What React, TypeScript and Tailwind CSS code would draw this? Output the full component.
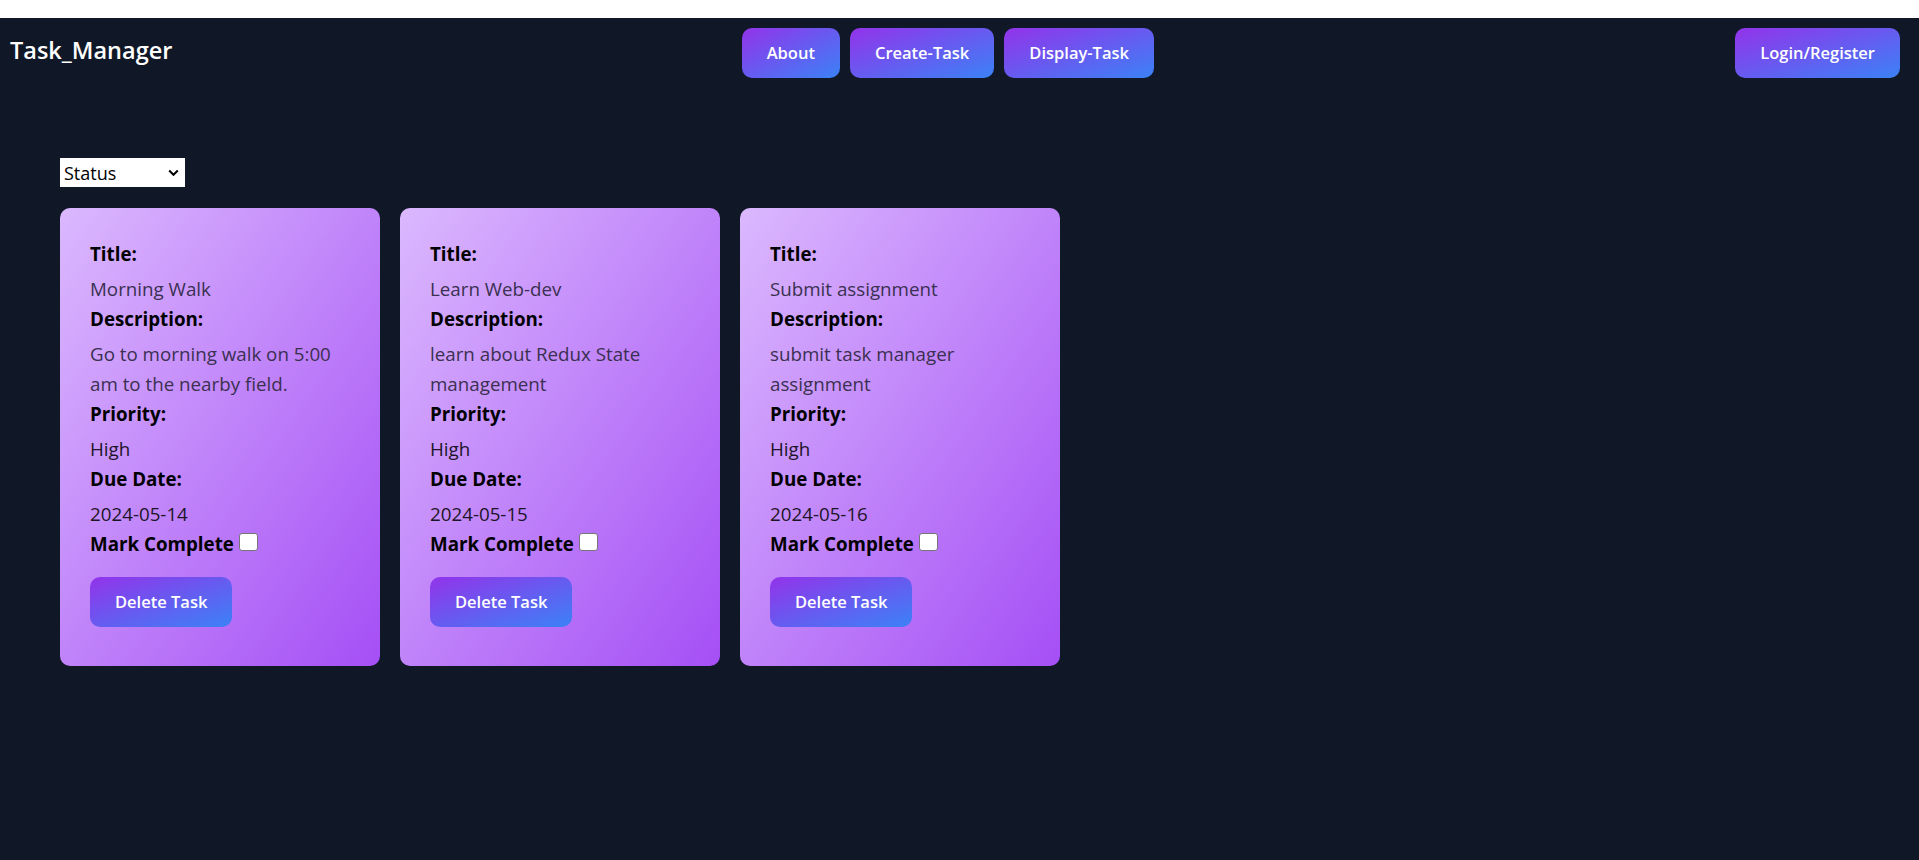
import React from "react";

interface Task {
  title: string;
  description: string;
  priority: string;
  dueDate: string;
}

const tasks: Task[] = [
  {
    title: "Morning Walk",
    description: "Go to morning walk on 5:00 am to the nearby field.",
    priority: "High",
    dueDate: "2024-05-14",
  },
  {
    title: "Learn Web-dev",
    description: "learn about Redux State management",
    priority: "High",
    dueDate: "2024-05-15",
  },
  {
    title: "Submit assignment",
    description: "submit task manager assignment",
    priority: "High",
    dueDate: "2024-05-16",
  },
];

const font = { fontFamily: '"Open Sans", "Noto Sans", sans-serif' };

const GradientButton = ({ children }: { children: React.ReactNode }) => (
  <button className="flex h-[50px] items-center rounded-[10px] bg-linear-to-br/srgb from-[#9333ea] to-[#3b82f6] px-[25px] text-[16.5px] font-semibold text-white">
    {children}
  </button>
);

const TaskCard = ({ task }: { task: Task }) => (
  <div className="w-[320px] rounded-[10px] bg-linear-to-br/srgb from-[#dbb8fe] to-[#a54ff5] p-[30px] text-[18.75px] leading-[30px]">
    <h4 className="mt-[1px] font-bold text-black">Title:</h4>
    <p className="mt-[5px] text-[#3a3050]">{task.title}</p>
    <h4 className="font-bold text-black">Description:</h4>
    <p className="mt-[5px] text-[#3a3050]">{task.description}</p>
    <h4 className="font-bold text-black">Priority:</h4>
    <p className="mt-[5px] text-[#1c1528]">{task.priority}</p>
    <h4 className="font-bold text-black">Due Date:</h4>
    <p className="mt-[5px] text-[#1c1528]">{task.dueDate}</p>
    <div>
      <span className="font-bold text-black">Mark Complete</span>{" "}
      <input
        type="checkbox"
        className="h-[18px] w-[19px] appearance-none rounded-[3px] border border-[#767676] bg-white align-baseline"
      />
    </div>
    <div className="mt-[18px] mb-[9px]">
      <GradientButton>Delete Task</GradientButton>
    </div>
  </div>
);

export default function App() {
  return (
    <div className="min-h-[860px] bg-[#101828]" style={font}>
      {/* strip at the top */}
      <div className="h-[18px] bg-white" />
      {/* nav */}
      <header className="flex items-start justify-between py-[10px] pr-[19px] pl-[10px]">
        <h1 className="mt-[5px] text-[23.5px] leading-[35px] font-semibold text-white">
          Task_Manager
        </h1>
        <nav className="mr-[12px] flex gap-[10px]">
          <GradientButton>About</GradientButton>
          <GradientButton>Create-Task</GradientButton>
          <GradientButton>Display-Task</GradientButton>
        </nav>
        <GradientButton>Login/Register</GradientButton>
      </header>

      <main className="px-[60px]">
        {/* filter */}
        <div className="relative mt-[70px] h-[29px] w-[125px] bg-white">
          <select className="h-full w-full appearance-none bg-white pt-[2px] pl-[4px] text-[18px] text-black outline-none">
            <option>Status</option>
            <option>Completed</option>
            <option>Pending</option>
          </select>
          <svg
            className="pointer-events-none absolute top-[11px] right-[6px]"
            width="11"
            height="8"
            viewBox="0 0 11 8"
            fill="none"
          >
            <path d="M1.2 1.5 5.5 5.8 9.8 1.5" stroke="#000" strokeWidth="2" />
          </svg>
        </div>

        {/* cards */}
        <div className="mt-[21px] flex gap-[20px]">
          {tasks.map((task) => (
            <TaskCard key={task.title} task={task} />
          ))}
        </div>
      </main>
    </div>
  );
}
